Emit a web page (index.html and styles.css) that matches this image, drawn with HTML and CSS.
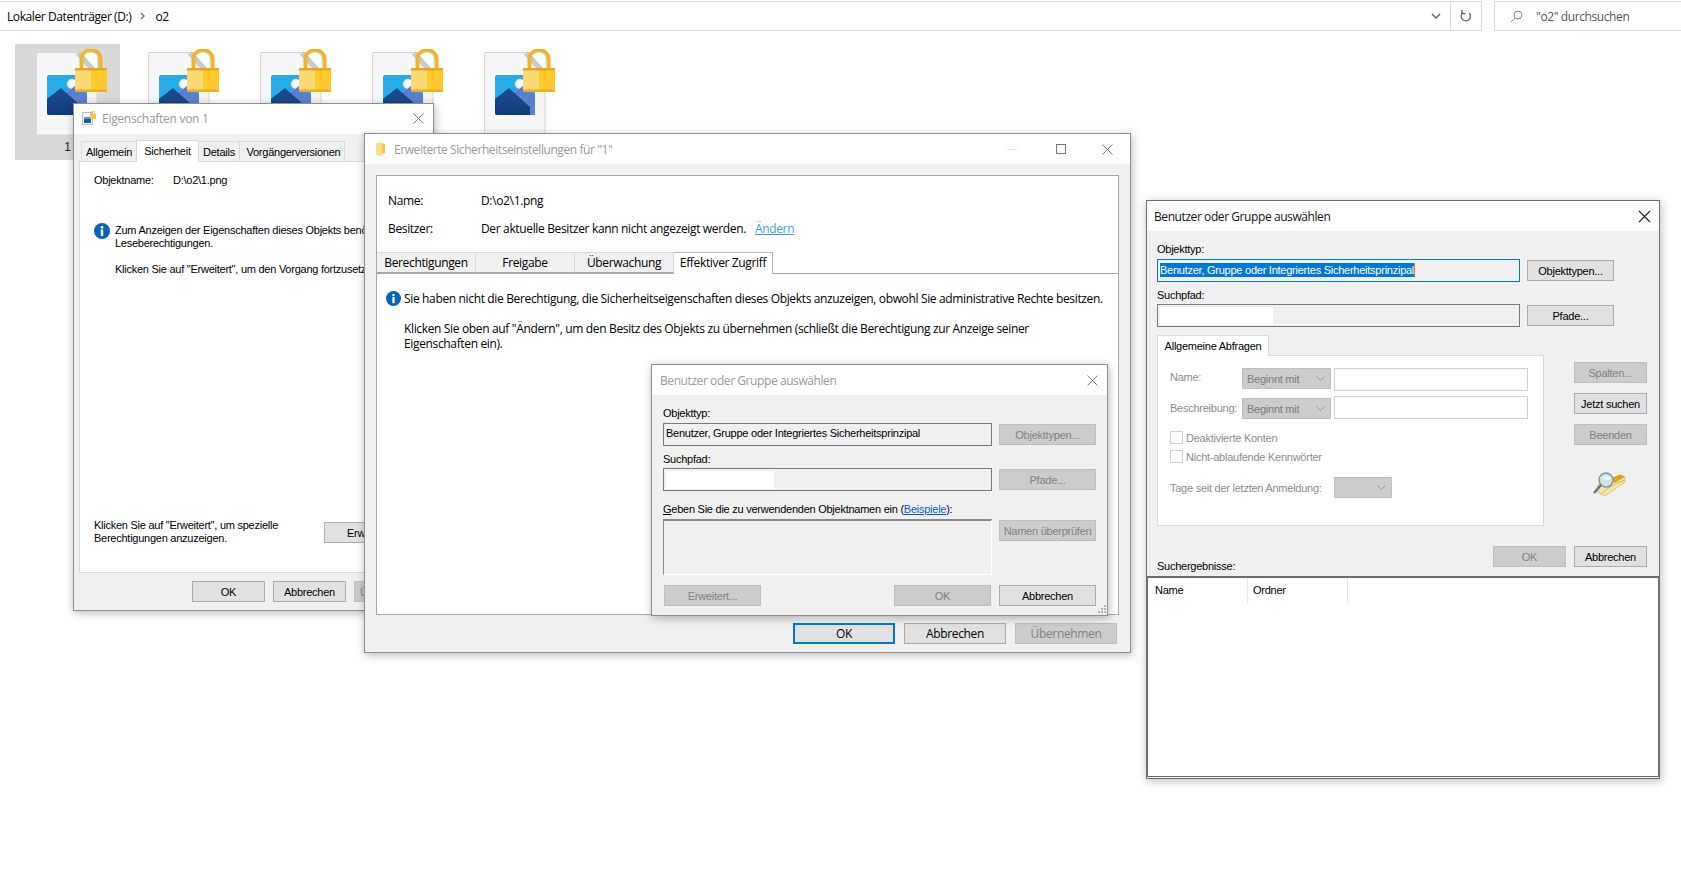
FILE: index.html
```html
<!DOCTYPE html>
<html lang="de">
<head>
    <meta charset="UTF-8">
    <meta name="viewport" content="width=device-width, initial-scale=1.0">
    <title>Benutzer oder Gruppe auswählen</title>
    <link rel="stylesheet" href="styles.css">
</head>
<body>
    <svg class="defs" width="0" height="0">
        <defs>
            <linearGradient id="mount" x1="0" y1="0" x2="0" y2="1">
                <stop offset="0" stop-color="#1d4f92"/>
                <stop offset="1" stop-color="#0f3a78"/>
            </linearGradient>
            <symbol id="file-icon" viewBox="0 0 72 87">
                <path d="M1.5 3.5H62V86H1.5Z" fill="#f6f6f8" stroke="#d6d6d6"/>
                <path d="M43 3.5L62 24V3.5Z" fill="#fff"/>
                <path d="M43 4L62 25" stroke="#c8c8c8" stroke-width="5"/>
                <rect x="12" y="26" width="40" height="40" rx="2" fill="#29abe8"/>
                <circle cx="37" cy="35" r="5" fill="#f2f6fa"/>
                <path d="M30 45L41 36L52 46V66H34Z" fill="#5b80d2"/>
                <path d="M12 50L26 39L47 58V66H14Q12 66 12 64Z" fill="url(#mount)"/>
                <path d="M46.5 20V10a9.5 9 0 0 1 19 0V20" fill="none" stroke="#f0b52c" stroke-width="4"/>
                <rect x="40" y="19" width="16" height="24" fill="#fdd876"/>
                <rect x="56" y="19" width="16" height="24" fill="#fec92f"/>
                <rect x="40" y="19" width="32" height="2.5" fill="#e5a823"/>
                <rect x="40" y="40.5" width="32" height="2.5" fill="#e8ad2a"/>
            </symbol>
        </defs>
    </svg>

    <div class="address-row">
        <div class="address-box">
            <span class="crumb">Lokaler Datenträger (D:)</span>
            <svg class="crumb-arrow" width="6" height="8" viewBox="0 0 6 8"><path d="M1 1l3 3-3 3" fill="none" stroke="#808080" stroke-width="1.5"/></svg>
            <span class="crumb">o2</span>
            <svg class="address-chevron" width="10" height="6" viewBox="0 0 10 6"><path d="M1 1l4 4 4-4" fill="none" stroke="#666" stroke-width="1.5"/></svg>
            <span class="address-refresh">
                <svg width="12" height="14" viewBox="0 0 12 14"><path d="M9.3 4.2A4.6 4.6 0 1 1 3 3.6" fill="none" stroke="#666" stroke-width="1.3"/><path d="M2 1v3.6h3.6" fill="none" stroke="#666" stroke-width="1.3"/></svg>
            </span>
        </div>
        <div class="search-box">
            <svg width="13" height="13" viewBox="0 0 13 13"><circle cx="8" cy="5" r="4" fill="none" stroke="#888"/><path d="M5 8l-4 4" stroke="#a88" stroke-width="1"/></svg>
            <span>"o2" durchsuchen</span>
        </div>
    </div>

    <div class="file-list">
        <div class="file-tile selected"><svg width="72" height="87"><use href="#file-icon"/></svg><span class="file-name">1</span></div>
        <div class="file-tile"><svg width="72" height="87"><use href="#file-icon"/></svg></div>
        <div class="file-tile"><svg width="72" height="87"><use href="#file-icon"/></svg></div>
        <div class="file-tile"><svg width="72" height="87"><use href="#file-icon"/></svg></div>
        <div class="file-tile"><svg width="72" height="87"><use href="#file-icon"/></svg></div>
    </div>

    <!-- Eigenschaften -->
    <div class="window win-props">
        <div class="title-bar">
            <svg class="title-icon" width="14" height="14" viewBox="0 0 14 14"><rect x="0.5" y="1.5" width="10" height="12" fill="#f6f6f8" stroke="#bbb"/><rect x="2" y="6" width="7" height="6" fill="#1c5aa0"/><path d="M2 6h7v2H2z" fill="#29abe8"/><rect x="8" y="3" width="6" height="5" fill="#fdc93a"/><path d="M9.3 3V1.6a1.7 1.7 0 0 1 3.4 0V3" fill="none" stroke="#f0b52c"/></svg>
            <span class="title-text seg">Eigenschaften von 1</span>
            <svg class="title-close" width="11" height="11" viewBox="0 0 11 11"><path d="M.5.5l10 10M10.500.5l-10 10" stroke="#777"/></svg>
        </div>
        <div class="props-body">
            <div class="props-tabs">
                <span class="props-tab tab-allgemein">Allgemein</span>
                <span class="props-tab props-tab-active tab-sicherheit">Sicherheit</span>
                <span class="props-tab tab-details">Details</span>
                <span class="props-tab tab-versionen">Vorgängerversionen</span>
            </div>
            <div class="props-panel">
                <div class="props-name"><span class="props-name-label">Objektname:</span><span>D:\o2\1.png</span></div>
                <div class="props-info">
                    <svg class="info-icon" width="16" height="16" viewBox="0 0 16 16"><circle cx="8" cy="8" r="8" fill="#0b63b8"/><rect x="6.800" y="6.500" width="2.400" height="6.500" fill="#fff"/><circle cx="8" cy="4.300" r="1.400" fill="#fff"/></svg>
                    <div class="props-info-text">
                        <p>Zum Anzeigen der Eigenschaften dieses Objekts benötigen Sie<br>Leseberechtigungen.</p>
                        <p class="props-info-next">Klicken Sie auf "Erweitert", um den Vorgang fortzusetzen.</p>
                    </div>
                </div>
                <div class="props-advanced">
                    <p>Klicken Sie auf "Erweitert", um spezielle<br>Berechtigungen anzuzeigen.</p>
                    <button class="btn btn-small">Erweitert</button>
                </div>
            </div>
            <div class="props-footer">
                <button class="btn btn-small">OK</button>
                <button class="btn btn-small">Abbrechen</button>
                <button class="btn btn-small btn-off">Übernehmen</button>
            </div>
        </div>
    </div>

    <!-- Erweiterte Sicherheitseinstellungen -->
    <div class="window win-security">
        <div class="title-bar">
            <svg class="title-icon" width="10" height="14" viewBox="0 0 10 14"><path d="M0 1l6-1v1l3 1v9l-3 1v2l-6-1Z" fill="#fbdf8b"/><path d="M6 1l3 1v9l-3 1Z" fill="#f5c84a"/></svg>
            <span class="title-text seg">Erweiterte Sicherheitseinstellungen für "1"</span>
            <svg class="caption-min" width="10" height="1" viewBox="0 0 10 1"><path d="M0 .5h10" stroke="#ddd"/></svg>
            <svg class="caption-max" width="10" height="10" viewBox="0 0 10 10"><rect x=".5" y=".5" width="9" height="9" fill="none" stroke="#777"/></svg>
            <svg class="caption-close" width="11" height="11" viewBox="0 0 11 11"><path d="M.5.5l10 10M10.500.5l-10 10" stroke="#777"/></svg>
        </div>
        <div class="security-panel seg">
            <div class="security-head">
                <div class="security-row"><span class="security-label">Name:</span><span>D:\o2\1.png</span></div>
                <div class="security-row"><span class="security-label">Besitzer:</span><span>Der aktuelle Besitzer kann nicht angezeigt werden.</span><a class="security-link">Ändern</a></div>
            </div>
            <div class="security-tabs">
                <span class="security-tab">Berechtigungen</span>
                <span class="security-tab">Freigabe</span>
                <span class="security-tab">Überwachung</span>
                <span class="security-tab security-tab-active">Effektiver Zugriff</span>
            </div>
            <div class="security-msg">
                <svg class="info-icon" width="15" height="15" viewBox="0 0 16 16"><circle cx="8" cy="8" r="8" fill="#0b63b8"/><rect x="6.800" y="6.500" width="2.400" height="6.500" fill="#fff"/><circle cx="8" cy="4.300" r="1.400" fill="#fff"/></svg>
                <div>
                    <p>Sie haben nicht die Berechtigung, die Sicherheitseigenschaften dieses Objekts anzuzeigen, obwohl Sie administrative Rechte besitzen.</p>
                    <p class="security-msg-next">Klicken Sie oben auf "Ändern", um den Besitz des Objekts zu übernehmen (schließt die Berechtigung zur Anzeige seiner<br>Eigenschaften ein).</p>
                </div>
            </div>
        </div>
        <div class="security-footer seg">
            <button class="btn btn-wide btn-default">OK</button>
            <button class="btn btn-wide">Abbrechen</button>
            <button class="btn btn-wide btn-off">Übernehmen</button>
        </div>
    </div>

    <!-- Benutzer oder Gruppe, inaktiv -->
    <div class="window win-select">
        <div class="title-bar">
            <span class="title-text seg">Benutzer oder Gruppe auswählen</span>
            <svg class="title-close" width="11" height="11" viewBox="0 0 11 11"><path d="M.5.5l10 10M10.500.5l-10 10" stroke="#777"/></svg>
        </div>
        <div class="select-body">
            <label class="field-label">Objekttyp:</label>
            <div class="select-row">
                <div class="field field-text">Benutzer, Gruppe oder Integriertes Sicherheitsprinzipal</div>
                <button class="btn btn-side btn-off">Objekttypen...</button>
            </div>
            <label class="field-label field-label-2">Suchpfad:</label>
            <div class="select-row">
                <div class="field"><span class="path-white"></span></div>
                <button class="btn btn-side btn-off">Pfade...</button>
            </div>
            <label class="field-label field-label-3"><u>G</u>eben Sie die zu verwendenden Objektnamen ein (<a class="example-link">Beispiele</a>):</label>
            <div class="select-row select-row-names">
                <div class="names-box"></div>
                <button class="btn btn-side btn-off">Namen überprüfen</button>
            </div>
            <div class="select-footer">
                <button class="btn btn-side btn-off">Erweitert...</button>
                <button class="btn btn-side btn-off select-ok">OK</button>
                <button class="btn btn-side">Abbrechen</button>
            </div>
        </div>
        <svg class="grip" width="9" height="9" viewBox="0 0 9 9"><path d="M7 0h2v2H7zM4 3h2v2H4zM7 3h2v2H7zM1 6h2v2H1zM4 6h2v2H4zM7 6h2v2H7z" fill="#b5b5b5"/></svg>
    </div>

    <!-- Benutzer oder Gruppe, aktiv -->
    <div class="window win-search">
        <div class="title-bar">
            <span class="title-text title-active seg">Benutzer oder Gruppe auswählen</span>
            <svg class="title-close" width="13" height="13" viewBox="0 0 13 13"><path d="M1 1l11 11M12 1L1 12" stroke="#222" stroke-width="1.100"/></svg>
        </div>
        <div class="search-body">
            <label class="field-label">Objekttyp:</label>
            <div class="search-row">
                <div class="field field-focus"><span class="field-selected">Benutzer, Gruppe oder Integriertes Sicherheitsprinzipal</span><span class="field-caret"></span></div>
                <button class="btn btn-search">Objekttypen...</button>
            </div>
            <label class="field-label field-label-2">Suchpfad:</label>
            <div class="search-row">
                <div class="field"><span class="path-white path-white-2"></span></div>
                <button class="btn btn-search">Pfade...</button>
            </div>
            <div class="query-area">
                <div class="query-left">
                    <span class="query-tab">Allgemeine Abfragen</span>
                    <div class="query-panel">
                        <div class="query-row">
                            <span class="query-label">Name:</span>
                            <span class="combo">Beginnt mit<svg width="9" height="5" viewBox="0 0 9 5"><path d="M.5.5l4 4 4-4" fill="none" stroke="#999"/></svg></span>
                            <span class="query-input"></span>
                        </div>
                        <div class="query-row query-row-2">
                            <span class="query-label">Beschreibung:</span>
                            <span class="combo">Beginnt mit<svg width="9" height="5" viewBox="0 0 9 5"><path d="M.5.5l4 4 4-4" fill="none" stroke="#999"/></svg></span>
                            <span class="query-input"></span>
                        </div>
                        <div class="check-row"><span class="check"></span>Deaktivierte Konten</div>
                        <div class="check-row check-row-2"><span class="check"></span>Nicht-ablaufende Kennwörter</div>
                        <div class="days-row">
                            <span class="days-label">Tage seit der letzten Anmeldung:</span>
                            <span class="combo combo-days"><svg width="9" height="5" viewBox="0 0 9 5"><path d="M.5.5l4 4 4-4" fill="none" stroke="#999"/></svg></span>
                        </div>
                    </div>
                </div>
                <div class="query-right">
                    <button class="btn btn-query btn-off">Spalten...</button>
                    <button class="btn btn-query">Jetzt suchen</button>
                    <button class="btn btn-query btn-off">Beenden</button>
                    <svg class="search-icon" width="34" height="26" viewBox="0 0 34 26">
                        <path d="M5 13L27 3l6 2v5L13 24l-6-3Z" fill="#f4e7a4" stroke="#c9b765" stroke-width=".7"/>
                        <path d="M20 6l9-3.500 4 2.500-11 6Z" fill="#d6a524"/>
                        <path d="M9 22l6-5 10-6 8-3" fill="none" stroke="#bda851" stroke-width=".7"/>
                        <circle cx="14" cy="8" r="7" fill="#d6e4d8" stroke="#7d97b8" stroke-width="1.500"/>
                        <path d="M9 6q5-4 10 0q-2 4-10 0Z" fill="#eef3f8"/>
                        <path d="M9 13L2 21" stroke="#6c7580" stroke-width="2.500"/>
                    </svg>
                </div>
            </div>
            <div class="search-footer">
                <span class="results-label">Suchergebnisse:</span>
                <button class="btn btn-query btn-off">OK</button>
                <button class="btn btn-query">Abbrechen</button>
            </div>
        </div>
        <div class="results-list">
            <div class="results-head">
                <span class="results-col results-col-name">Name</span>
                <span class="results-col results-col-folder">Ordner</span>
            </div>
        </div>
    </div>
</body>
</html>
```

FILE: styles.css
```css
* {
    box-sizing: border-box;
}

body {
    margin: 0;
    height: 884px;
    overflow: hidden;
    position: relative;
    background: white;
    font-family: "Liberation Sans", Arial, sans-serif;
    font-size: 11px;
    letter-spacing: -0.25px;
    color: #000;
}

p {
    margin: 0;
}

.defs {
    position: absolute;
}

.seg {
    font-family: "Open Sans", "Noto Sans", sans-serif;
    font-size: 12px;
    letter-spacing: -0.35px;
}

/* Explorer */
.address-row {
    display: flex;
    gap: 12px;
    height: 30px;
    margin-top: 1px;
    font-family: "Open Sans", "Noto Sans", sans-serif;
    font-size: 12px;
    letter-spacing: -0.4px;
}

.address-box {
    width: 1482px;
    display: flex;
    align-items: center;
    padding-left: 7px;
    border-top: 1px solid #d9d9d9;
    border-bottom: 1px solid #d9d9d9;
    border-right: 1px solid #d9d9d9;
}

.crumb-arrow {
    margin: 0 9px 0 9px;
}

.address-chevron {
    margin-left: auto;
    margin-right: 9px;
}

.address-refresh {
    width: 31px;
    height: 100%;
    display: flex;
    align-items: center;
    justify-content: center;
    border-left: 1px solid #d9d9d9;
}

.search-box {
    flex: 1;
    display: flex;
    align-items: center;
    gap: 13px;
    padding-left: 15px;
    color: #555;
    border: 1px solid #d9d9d9;
    border-right: none;
}

.file-list {
    display: flex;
    padding: 13px 0 0 15px;
    gap: 7px;
}

.file-tile {
    width: 105px;
    height: 116px;
    padding: 5px 0 0 20px;
    position: relative;
}

.file-tile.selected {
    background: #d9d9d9;
}

.file-name {
    position: absolute;
    left: 0;
    right: 0;
    top: 96px;
    text-align: center;
    font-size: 12px;
    color: #222;
}

/* Fenster */
.window {
    position: absolute;
    background: #f0f0f0;
    border: 1px solid #8f8f8f;
    box-shadow: 1px 2px 9px rgba(0, 0, 0, 0.28);
}

.title-bar {
    height: 30px;
    background: white;
    display: flex;
    align-items: center;
    padding: 0 9px 0 8px;
    position: relative;
}

.title-icon {
    margin-right: 6px;
    flex: none;
}

.title-text {
    color: #999;
    white-space: nowrap;
    letter-spacing: -0.42px;
}

.title-active {
    color: #111;
}

.title-close {
    margin-left: auto;
}

.btn {
    font-family: inherit;
    font-size: inherit;
    background: #e1e1e1;
    border: 1px solid #adadad;
    color: #000;
    padding: 0;
    flex: none;
    white-space: nowrap;
    letter-spacing: inherit;
}

.btn-off {
    background: #cccccc;
    border-color: #bfbfbf;
    color: #838383;
}

/* Eigenschaften von 1 */
.win-props {
    left: 73px;
    top: 103px;
    width: 361px;
    height: 508px;
}

.win-props .title-bar {
    padding-bottom: 2px;
}

.win-props .title-text {
    letter-spacing: -0.28px;
}

.props-body {
    padding: 6px 6px 0 5px;
}

.props-tabs {
    display: flex;
    align-items: flex-end;
    height: 21px;
    padding-left: 2px;
}

.props-tab {
    height: 20px;
    line-height: 21px;
    text-align: center;
    background: #f0f0f0;
    border: 1px solid #d9d9d9;
    border-bottom: none;
    margin-left: -1px;
}

.props-tab-active {
    height: 22px;
    line-height: 20px;
    background: white;
    position: relative;
    top: 1px;
}

.tab-allgemein { width: 56px; margin-left: 0; }
.tab-sicherheit { width: 63px; }
.tab-details { width: 42px; }
.tab-versionen { width: 106px; padding-left: 3px; }

.props-panel {
    height: 412px;
    background: white;
    border: 1px solid #d9d9d9;
    padding: 12px 14px 0;
}

.props-name {
    display: flex;
}

.props-name-label {
    width: 79px;
}

.props-info {
    display: flex;
    gap: 5px;
    margin-top: 37px;
    line-height: 13px;
    white-space: nowrap;
}

.props-info-text {
    padding-top: 1px;
}

.info-icon {
    flex: none;
}

.props-info-next {
    margin-top: 13px;
}

.props-advanced {
    display: flex;
    margin-top: 243px;
    line-height: 13px;
    white-space: nowrap;
}

.props-advanced p {
    width: 230px;
    flex: none;
}

.btn-small {
    width: 73px;
    height: 21px;
}

.props-advanced .btn-small {
    margin-top: 3px;
    text-align: left;
    padding-left: 22px;
}

.props-footer {
    display: flex;
    gap: 8px;
    padding-left: 113px;
    margin-top: 8px;
}

/* Erweiterte Sicherheitseinstellungen */
.win-security {
    left: 364px;
    top: 133px;
    width: 767px;
    height: 520px;
}

.win-security .title-bar {
    padding-left: 11px;
}

.win-security .title-icon {
    margin-right: 8px;
}

.caption-min {
    margin-left: auto;
    margin-right: 39px;
}

.caption-max {
    margin-right: 36px;
}

.caption-close {
    margin-right: 8px;
}

.security-panel {
    margin: 11px 11px 0;
    height: 440px;
    background: white;
    border: 1px solid #a9a9a9;
}

.security-head {
    height: 76px;
    padding: 10px 11px 0;
}

.security-row {
    display: flex;
    height: 28px;
    align-items: center;
}

.security-label {
    width: 93px;
}

.security-link {
    margin-left: 9px;
    color: #3b9bf0;
    text-decoration: underline;
}

.security-tabs {
    display: flex;
    height: 22px;
    border-bottom: 1px solid #a9a9a9;
}

.security-tab {
    width: 99px;
    height: 21px;
    line-height: 20px;
    text-align: center;
    background: #f0f0f0;
    border: 1px solid #d9d9d9;
    border-left: none;
    border-bottom-color: #a9a9a9;
    white-space: nowrap;
}

.security-tab-active {
    height: 22px;
    background: white;
    border-color: #b5b5b5;
    border-bottom: none;
}

.security-msg {
    display: flex;
    gap: 3px;
    padding: 17px 9px 0;
    white-space: nowrap;
}

.security-msg p {
    line-height: 15px;
}

.security-msg-next {
    margin-top: 15px;
}

.security-footer {
    display: flex;
    gap: 9px;
    padding: 8px 0 0 428px;
}

.btn-wide {
    width: 102px;
    height: 21px;
}

.btn-default {
    border: 2px solid #0078d7;
}

/* Benutzer oder Gruppe, inaktiv */
.win-select {
    left: 651px;
    top: 364px;
    width: 457px;
    height: 252px;
}

.select-body {
    padding: 11px 11px 0;
}

.field-label {
    display: block;
    height: 14px;
    line-height: 14px;
}

.field-label-2 {
    margin-top: 5px;
    line-height: 16px;
}

.field-label-3 {
    margin-top: 11px;
}

.example-link {
    color: #0a5bc4;
    text-decoration: underline;
}

.select-row {
    display: flex;
    align-items: flex-start;
    gap: 7px;
    margin-top: 3px;
}

.field {
    width: 329px;
    height: 23px;
    border: 1px solid #7a7a7a;
    background: #f0f0f0;
    padding: 2px;
    flex: none;
    line-height: 15px;
}

.field-text {
    white-space: nowrap;
}

.path-white {
    display: block;
    width: 108px;
    height: 18px;
    background: white;
}

.btn-side {
    width: 97px;
    height: 21px;
    margin-top: 1px;
}

.names-box {
    width: 329px;
    height: 56px;
    flex: none;
    border: 1px solid;
    border-color: #8a8a8a white white #8a8a8a;
    border-top-width: 2px;
}

.select-footer {
    display: flex;
    margin-top: 10px;
    padding-left: 1px;
}

.select-footer .btn-side {
    margin-top: 0;
}

.select-ok {
    margin-left: 133px;
    margin-right: 8px;
}

.grip {
    position: absolute;
    right: 1px;
    bottom: 1px;
}

/* Benutzer oder Gruppe, aktiv */
.win-search {
    left: 1146px;
    top: 200px;
    width: 514px;
    height: 579px;
    border-color: #6f6f6f;
}

.win-search .title-bar {
    padding: 0 8px 0 7px;
}

.search-body {
    padding: 11px 11px 0 10px;
}

.search-row {
    display: flex;
    align-items: flex-start;
    gap: 7px;
    margin-top: 3px;
}

.search-row .field {
    width: 363px;
}

.field-focus {
    border-color: #0078d7;
    padding: 3px 2px;
    display: flex;
}

.field-selected {
    background: #0078d7;
    color: white;
    height: 14px;
    line-height: 14px;
    white-space: nowrap;
}

.field-caret {
    width: 1px;
    height: 14px;
    background: #ff7b00;
}

.path-white-2 {
    width: 113px;
}

.btn-search {
    width: 87px;
    height: 21px;
    margin-top: 1px;
}

.query-area {
    display: flex;
    margin-top: 8px;
}

.query-left {
    width: 387px;
    flex: none;
}

.query-tab {
    display: block;
    width: 112px;
    height: 21px;
    line-height: 20px;
    text-align: center;
    white-space: nowrap;
    background: white;
    border: 1px solid #d9d9d9;
    border-bottom: none;
    position: relative;
    z-index: 1;
}

.query-panel {
    height: 171px;
    margin-top: -1px;
    background: white;
    border: 1px solid #d9d9d9;
    padding: 12px 15px 0 12px;
    color: #8c8c8c;
}

.query-row {
    display: flex;
    align-items: flex-start;
    height: 23px;
}

.query-row-2 {
    margin-top: 5px;
}

.query-label {
    width: 72px;
    flex: none;
    line-height: 18px;
    white-space: nowrap;
}

.query-row-2 .query-label {
    line-height: 24px;
}

.query-row-2 .combo {
    margin-top: 2px;
}

.combo {
    width: 89px;
    height: 21px;
    line-height: 20px;
    flex: none;
    display: flex;
    align-items: center;
    justify-content: space-between;
    padding: 0 5px 0 4px;
    background: #cccccc;
    border: 1px solid #bfbfbf;
    color: #7c7c7c;
}

.query-input {
    width: 194px;
    height: 23px;
    margin-left: 3px;
    border: 1px solid #cfcfcf;
    background: white;
    flex: none;
}

.check-row {
    display: flex;
    align-items: center;
    gap: 3px;
    height: 13px;
    margin-top: 12px;
    white-space: nowrap;
}

.check-row-2 {
    margin-top: 6px;
}

.check {
    width: 13px;
    height: 13px;
    border: 1px solid #cfcfcf;
    background: white;
    flex: none;
}

.days-row {
    display: flex;
    align-items: center;
    margin-top: 14px;
}

.days-label {
    width: 164px;
    flex: none;
    white-space: nowrap;
}

.combo-days {
    width: 58px;
    justify-content: flex-end;
}

.query-right {
    margin-left: 30px;
    padding-top: 27px;
    display: flex;
    flex-direction: column;
    gap: 10px;
    align-items: flex-start;
}

.btn-query {
    width: 73px;
    height: 21px;
}

.search-icon {
    margin: 17px 0 0 18px;
}

.search-footer {
    display: flex;
    gap: 8px;
    height: 31px;
    padding: 20px 0 0 336px;
    position: relative;
}

.results-label {
    position: absolute;
    left: 0;
    top: 34px;
}

.results-list {
    margin-top: 19px;
    height: 201px;
    background: white;
    border: 1px solid #6f6f6f;
    border-top-width: 2px;
}

.results-head {
    display: flex;
    height: 25px;
}

.results-col {
    line-height: 24px;
    border-right: 1px solid #e5e5e5;
    padding-left: 7px;
}

.results-col-name {
    width: 100px;
}

.results-col-folder {
    width: 100px;
    padding-left: 5px;
}
```
